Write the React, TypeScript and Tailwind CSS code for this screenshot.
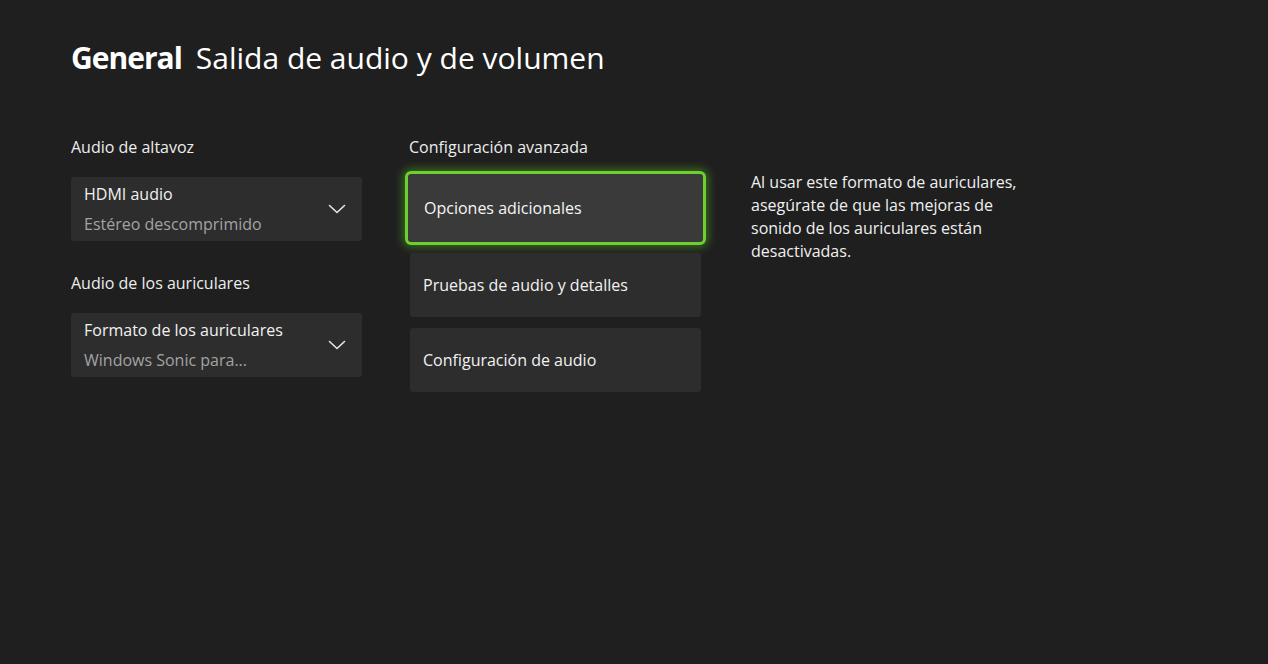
import React from 'react';

const Chevron = () => (
  <svg width="18" height="10" viewBox="0 0 18 10" fill="none" className="shrink-0">
    <path d="M1.5 1.5 L9 8.5 L16.5 1.5" stroke="#e8e8e8" strokeWidth="1.6" strokeLinecap="round" strokeLinejoin="round" />
  </svg>
);

const SelectCard = ({ title, value }: { title: string; value: string }) => (
  <div className="flex h-16 w-[291px] items-center justify-between rounded-[3px] bg-[#2d2d2d] pl-[13px] pr-[16px]">
    <div className="flex flex-col">
      <span className="text-[16px] leading-[22px] text-[#f2f2f2]">{title}</span>
      <span className="mt-[8px] text-[16px] leading-[22px] text-[#a3a3a3]">{value}</span>
    </div>
    <Chevron />
  </div>
);

const OptionCard = ({ label }: { label: string }) => (
  <div className="flex h-16 w-[291px] items-center rounded-[3px] bg-[#2d2d2d] pl-[13px] text-[16px] text-[#f2f2f2]">
    {label}
  </div>
);

export default function App() {
  return (
    <div
      className="min-h-screen w-full bg-[#1f1f1f] text-white"
      style={{ fontFamily: '"Open Sans", "Noto Sans", sans-serif' }}
    >
      <div className="pl-[71px] pt-[38px]">
        <h1 className="flex items-baseline gap-[14px] text-[30px] leading-[40px]">
          <span className="font-bold tracking-[-1px]">General</span>
          <span className="font-normal">Salida de audio y de volumen</span>
        </h1>

        <div className="mt-[58px] flex">
          {/* Columna izquierda */}
          <div className="flex w-[291px] flex-col">
            <div className="text-[16px] leading-[22px] text-[#ededed]">Audio de altavoz</div>
            <div className="mt-[19px]">
              <SelectCard title="HDMI audio" value="Estéreo descomprimido" />
            </div>
            <div className="mt-[31px] text-[16px] leading-[22px] text-[#ededed]">Audio de los auriculares</div>
            <div className="mt-[19px]">
              <SelectCard title="Formato de los auriculares" value="Windows Sonic para..." />
            </div>
          </div>

          {/* Columna central */}
          <div className="ml-[48px] flex w-[291px] flex-col">
            <div className="-ml-px text-[16px] leading-[22px] text-[#ededed]">Configuración avanzada</div>
            <div className="mt-[13px] -mx-[5px] flex h-[74px] w-[301px] items-center rounded-[6px] border-[3px] border-[#6bd12f] bg-[#3a3a3a] pl-[16px] text-[16px] text-[#f5f5f5] shadow-[0_0_10px_2px_rgba(100,210,40,0.45)]">
              Opciones adicionales
            </div>
            <div className="mt-[8px]">
              <OptionCard label="Pruebas de audio y detalles" />
            </div>
            <div className="mt-[11px]">
              <OptionCard label="Configuración de audio" />
            </div>
          </div>

          {/* Texto de ayuda */}
          <div className="ml-[50px] mt-[35px] w-[290px] text-[16px] leading-[23px] text-[#f0f0f0]">
            Al usar este formato de auriculares, asegúrate de que las mejoras de sonido de los auriculares están desactivadas.
          </div>
        </div>
      </div>
    </div>
  );
}
